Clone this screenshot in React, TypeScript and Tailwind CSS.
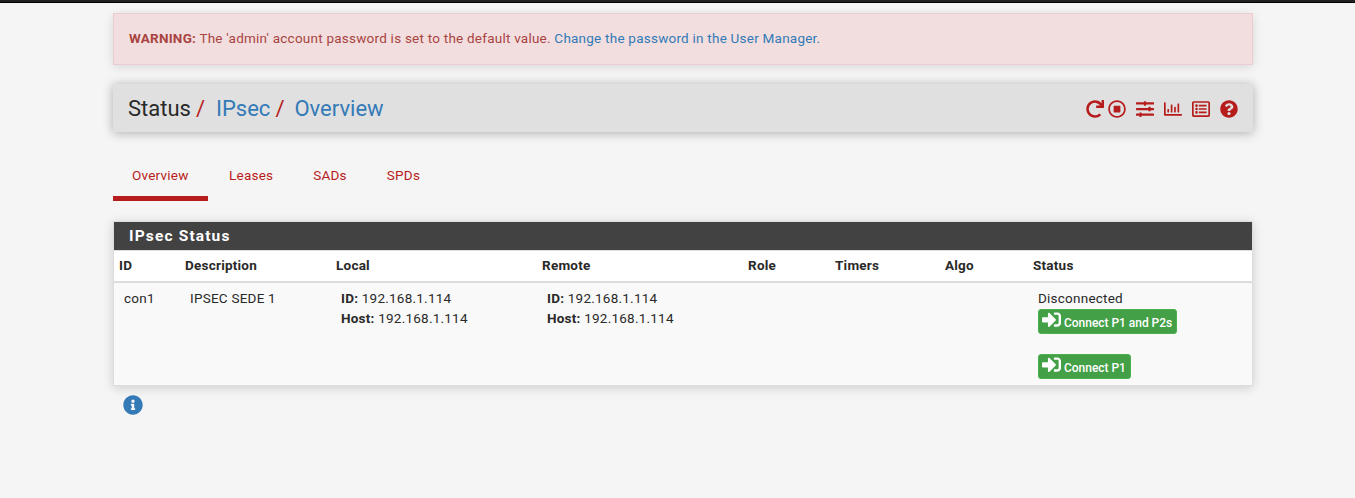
import React from "react";
import {
  FaInfoCircle,
  FaQuestionCircle,
  FaRedo,
  FaRegChartBar,
  FaRegListAlt,
  FaRegStopCircle,
  FaSignInAlt,
  FaSlidersH,
} from "react-icons/fa";

const tabs = ["Leases", "SADs", "SPDs"];
const columns = ["ID", "Description", "Local", "Remote", "Role", "Timers", "Algo", "Status"];

function Endpoint() {
  return (
    <td className="pl-[10px] pt-[5px]">
      <b>ID:</b> 192.168.1.114
      <br />
      <b>Host:</b> 192.168.1.114
    </td>
  );
}

function ConnectButton({ label }: { label: string }) {
  return (
    <button className="flex h-[25px] items-center rounded-[3px] border border-[#4caf50] bg-[#43a047] pl-[3px] pr-1 text-[12px] font-medium tracking-[-0.03px] text-white">
      <FaSignInAlt className="-mt-[3px] mr-[3px] size-[19px]" />
      <span className="pt-[4px]">{label}</span>
    </button>
  );
}

export default function App() {
  return (
    <div className="min-h-[498px] bg-[#f5f5f5] font-['Roboto',sans-serif] text-[13.5px] leading-[20px] tracking-[0.23px] text-[#292929]">
      <div className="h-[3px] border-b border-black bg-[#212121]" />
      <main className="ml-[113px] w-[1140px] pt-[10px]">
        <div className="h-[52px] border border-[#ebccd1] bg-[#f2dede] px-[15px] pt-[14px] text-[#a94442] shadow-[0_2px_10px_rgba(0,0,0,0.12)]">
          <b>WARNING:</b> The 'admin' account password is set to the default value.{" "}
          <a className="text-[#337ab7]">Change the password in the User Manager.</a>
        </div>
        <header className="mt-[19px] flex h-[48px] items-center justify-between bg-[#e0e0e0] px-[15px] shadow-[0_1px_10px_rgba(0,0,0,0.3)]">
          <h1 className="flex pt-px text-[22px] leading-[48px] tracking-normal">
            <span>Status</span>
            <span className="ml-[5px] text-[#b71c1c]">/</span>
            <a className="ml-[11px] text-[#337ab7]">IPsec</a>
            <span className="ml-[5px] text-[#b71c1c]">/</span>
            <a className="ml-[10px] text-[#337ab7]">Overview</a>
          </h1>
          <div className="flex items-center pt-[2px] text-[#b71c1c]">
            <FaRedo className="size-[18px]" />
            <FaRegStopCircle className="ml-[4px] size-[18px]" />
            <FaSlidersH className="ml-[10px] size-[18px]" />
            <FaRegChartBar className="ml-[10px] size-[18px]" />
            <FaRegListAlt className="ml-[10px] size-[18px]" />
            <FaQuestionCircle className="ml-[10px] size-[18px]" />
          </div>
        </header>
        <nav className="mt-[20px] flex h-[49px] text-[#b71c1c]">
          <a className="w-[95px] border-b-[5px] border-[#b71c1c] pl-[19px] pt-[13px]">Overview</a>
          {tabs.map((t) => (
            <a key={t} className="pl-[21px] pr-[19px] pt-[13px]">
              {t}
            </a>
          ))}
        </nav>
        <section className="mt-[20px] border border-[#ddd] bg-white shadow-[0_2px_10px_rgba(0,0,0,0.16)]">
          <h2 className="h-[28px] bg-[#424242] pl-[15px] text-[15.5px] font-bold leading-[28px] tracking-[1.15px] text-white">
            IPsec Status
          </h2>
          <table className="w-full table-fixed border-collapse border-t border-[#ddd] text-left">
            <colgroup>
              <col className="w-[66px]" />
              <col className="w-[151px]" />
              <col className="w-[206px]" />
              <col className="w-[206px]" />
              <col className="w-[87px]" />
              <col className="w-[110px]" />
              <col className="w-[88px]" />
              <col />
            </colgroup>
            <thead>
              <tr className="h-[31px] border-b-2 border-[#ddd]">
                {columns.map((h) => (
                  <th key={h} className="pb-px pl-[5px] font-bold">
                    {h}
                  </th>
                ))}
              </tr>
            </thead>
            <tbody>
              <tr className="h-[103px] bg-[#f9f9f9] align-top">
                <td className="pl-[10px] pt-[5px]">con1</td>
                <td className="pl-[10px] pt-[5px]">IPSEC SEDE 1</td>
                <Endpoint />
                <Endpoint />
                <td />
                <td />
                <td />
                <td className="pl-[10px] pt-[5px]">
                  Disconnected
                  <div className="mt-px flex flex-col items-start gap-[20px]">
                    <ConnectButton label="Connect P1 and P2s" />
                    <ConnectButton label="Connect P1" />
                  </div>
                </td>
              </tr>
            </tbody>
          </table>
        </section>
        <div className="ml-[10px] mt-[9px] text-[#337ab7]">
          <FaInfoCircle className="size-[20px]" />
        </div>
      </main>
    </div>
  );
}
